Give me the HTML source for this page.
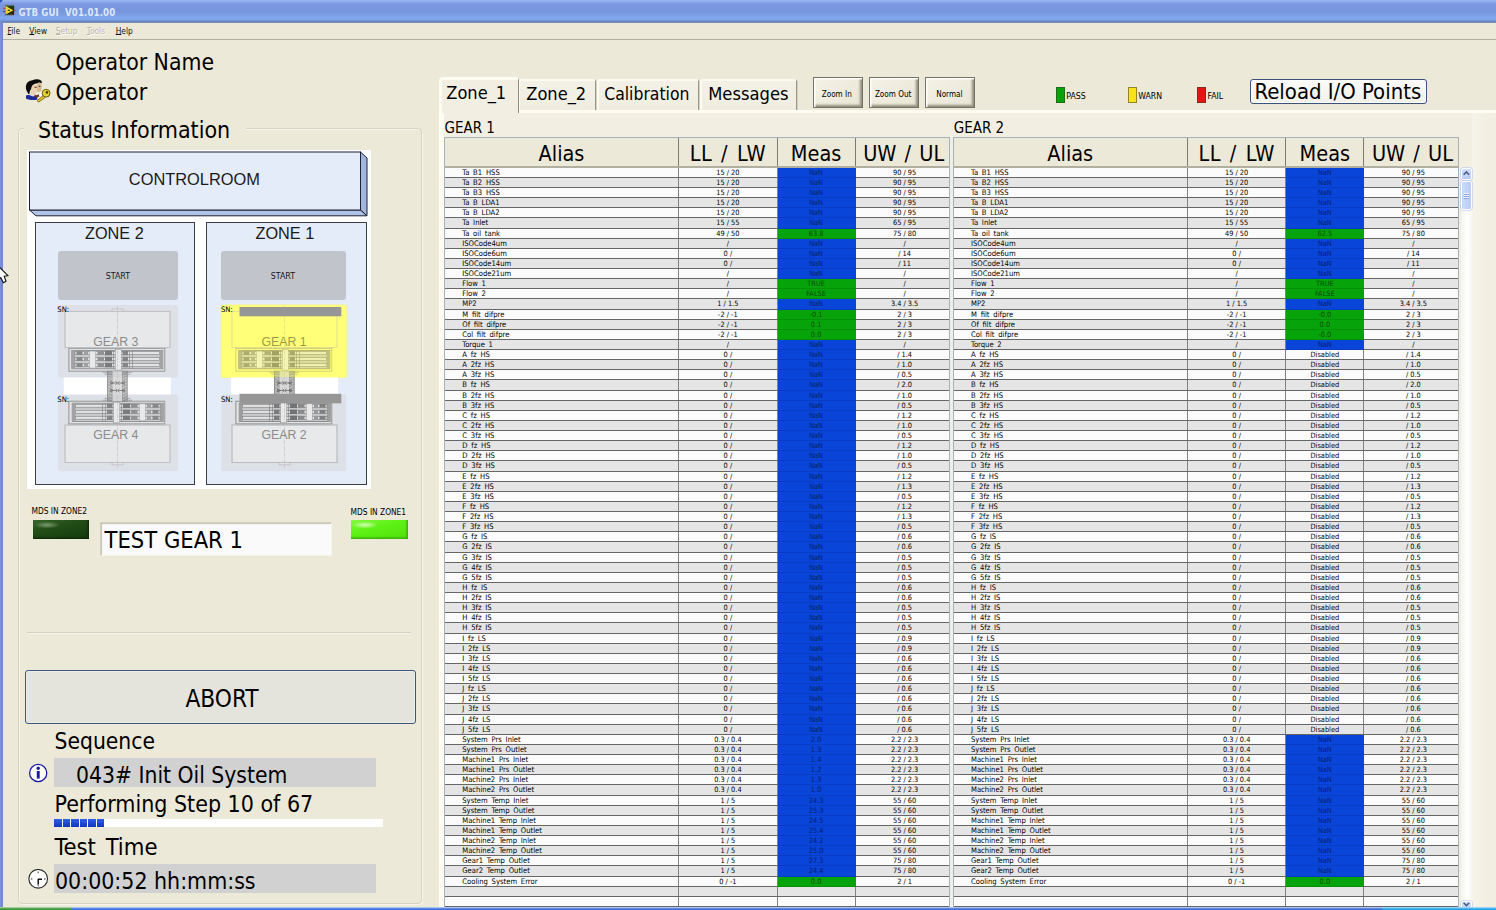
<!DOCTYPE html>
<html lang="en">
<head>
<meta charset="utf-8">
<title>GTB GUI V01.01.00</title>
<style>
*{box-sizing:border-box;margin:0;padding:0}
html,body{width:1496px;height:910px;overflow:hidden;background:#ece9d8}
body{position:relative;font-family:"DejaVu Sans Condensed","DejaVu Sans","Liberation Sans",sans-serif;font-stretch:condensed;color:#000;-webkit-font-smoothing:antialiased}
.abs{position:absolute}
.t{position:absolute;white-space:pre;line-height:1}
/* title bar */
#title{left:0;top:0;width:1496px;height:23px;background:linear-gradient(#9bb7f1 0,#8aa8ea 2px,#7b98e0 4px,#7795de 11px,#7a9be3 14px,#83a8ec 18px,#7d9fe4 20px,#6a85c6 21.5px,#7f8ea8 23px)}
#title .t{left:18.5px;top:8.2px;font-size:9.6px;font-weight:bold;color:#dde7fb;letter-spacing:.1px;text-shadow:none}
#lborder{left:0;top:20px;width:3px;height:890px;background:linear-gradient(90deg,#7f93d6,#6d84cf)}
#menu{left:3px;top:23px;width:1493px;height:17px;background:#ece9d8;border-bottom:1px solid #b0ae9e}
#menu .t{top:3.8px;font-size:8.3px;color:#111}
#menu .d{color:#b9b6a8;text-shadow:.6px .6px 0 #fff}
#menu u{text-decoration-thickness:.8px;text-underline-offset:.4px}
/* left panel */
.big{font-size:22.7px}
.grp{border:1px solid #d9d6c6;border-radius:3px;box-shadow:inset 1px 1px 0 #f7f5ea}
.field{background:#d0d0d0}
/* tabs */
.tab{position:absolute;background:#f0ede0;border:1px solid #fbfaf4;border-right:1.5px solid #aaa796;border-bottom:none;border-radius:3px 3px 0 0;font-size:18px}
/* tables */
.tbl{position:absolute;top:137.2px;height:773px;border:1px solid #a6b3bc;background:#fcfcfc;overflow:hidden}
.hd{position:absolute;left:0;top:0;width:100%;height:29.6px;background:#ece9d8;border-bottom:2px solid #b1b0a0}
.hd span{position:absolute;top:0;height:28px;text-align:center;font-size:21.5px;line-height:31.4px;word-spacing:2px;border-right:1.3px solid #7d7c74;white-space:pre}
.rows{position:absolute;left:0;top:29.6px;width:100%}
.r{position:relative;height:10.133px;border-bottom:1px solid #666;background:#fbfbfb;font-size:7.35px;line-height:10.7px;white-space:pre}
.r.e{background:#e5e5e5}
.r span{position:absolute;top:0;height:100%;text-align:center;border-right:1.3px solid #828282}
.r .a{left:0;width:234.5px;text-align:left;padding-left:17.5px;font-size:7.6px;word-spacing:1.6px}
.r .l{left:234.5px;width:98.25px}
.r .m{left:332.75px;width:78.2px}
.r .u{left:410.95px;width:93.05px;border-right:none;padding-left:4.8px}
.r .b{background:#0845d8;color:#071f6e;border-right-color:#0845d8;box-shadow:0 1px 0 #083cc2;left:332.75px;width:78.2px}
.r .g{background:#06a40a;color:#064a08;border-right-color:#06a40a;box-shadow:0 1px 0 #069008;left:332.75px;width:78.2px}
</style>
</head>
<body>
<div id="title" class="abs">
<svg class="abs" style="left:2px;top:3px" width="16" height="15" viewBox="2 3 16 15"><path d="M4.6 5h10M4.6 15.3h10" stroke="#6f7f8a" stroke-width="1" stroke-dasharray="1.2 .8"/><path d="M3 8.4h2.2M3 11.6h2.2" stroke="#c04058" stroke-width="1"/><path d="M3 11.6h2.2" stroke="#3a4aa8" stroke-width="1"/><path d="M14 10.3h2" stroke="#d04050" stroke-width="1.1"/><defs><linearGradient id="lvg" x1="0" y1="0" x2="1" y2="1"><stop offset="0" stop-color="#3a4416"/><stop offset=".5" stop-color="#1c3a14"/><stop offset="1" stop-color="#4a1606"/></linearGradient></defs><rect x="5" y="5.6" width="9.2" height="9.2" fill="url(#lvg)"/><polygon points="5.6,6 13.2,10.2 5.6,14.4" fill="#f2e23a"/><polygon points="5.6,6 8,7.3 8,13.1 5.6,14.4" fill="#f6c63a"/><ellipse cx="8.9" cy="10.3" rx="1.2" ry=".7" fill="#2a3a10"/></svg>
<span class="t">GTB GUI  V01.01.00</span><div class="abs" style="left:0;top:0;width:3px;height:3px;background:radial-gradient(circle at 0 0,#2a55b5 0,#2a55b5 1.5px,rgba(42,85,181,0) 3.2px)"></div></div>
<div id="menu" class="abs">
<span class="t" style="left:4.6px"><u>F</u>ile</span>
<span class="t" style="left:26.3px"><u>V</u>iew</span>
<span class="t d" style="left:52.8px"><u>S</u>etup</span>
<span class="t d" style="left:83.8px"><u>T</u>ools</span>
<span class="t" style="left:112.7px"><u>H</u>elp</span>
</div>
<div id="lborder" class="abs"></div>
<svg class="abs" style="left:0;top:260px" width="10" height="26" viewBox="0 260 10 26"><polygon points="-4.3,263.5 7.9,275.7 4.2,276.2 6,281.2 3.3,282.7 0.8,277.6 -4.3,281.5" fill="#fdfdff" stroke="#111" stroke-width="1.1"/></svg>

<!--LEFT_START-->
<div class="abs" style="left:17.50px;top:128.00px;width:404.50px;height:775.50px;border:1px solid #d6d3c2;border-radius:4px;box-shadow:inset 1px 1px 0 #f8f6ec,1px 1px 0 #f8f6ec"></div>
<div class="abs" style="left:24.00px;top:120.00px;width:222.00px;height:20.00px;background:#ece9d8"></div>
<span class="t" style="left:55.50px;top:51.45px;font-size:22.75px;">Operator Name</span>
<span class="t" style="left:55.50px;top:81.45px;font-size:22.75px;">Operator</span>
<span class="t" style="left:38.00px;top:118.74px;font-size:23.0px;">Status Information</span>
<svg class="abs" style="left:20px;top:74px" width="40" height="34" viewBox="0 0 40 34">
<path d="M6 21.5 C8 20.5 11 20.5 13 21 L17 22.5 L17.5 25.5 C13 26.5 8 26 6 24.5 Z" fill="#1d2a9a"/>
<path d="M9 21 L13 18 L16 21.5 L13 22.5 Z" fill="#e8d8d8"/>
<path d="M17 8.5 C19.5 8 21.5 9.5 21.6 12 L21.9 14.2 L21.2 15 L21.4 16.5 C20.5 18 18.5 18.2 17 17.5 Z" fill="#d9b890"/>
<path d="M10 12.5 C10 10 14 9.5 16 11 C17.5 12.5 17.2 14.5 17 16 L16.6 18.3 C16.4 20 15 21 13 20.6 L10.5 19 Z" fill="#ecd2b0"/>
<path d="M14.5 13.2h2.2M18.8 12.3h1.6" stroke="#2a1a10" stroke-width=".9" fill="none"/>
<path d="M14 20.5 C15.5 21.5 17.5 21.5 18.5 20 L19.5 22.5 L16 24 Z" fill="#7a2a1a"/>
<path d="M8.5 20 C6 17 5 13 6.5 10 C8 7 11 6.5 13 6 C15 4.8 19 5 21 6.5 C22 7.5 22 9 21.4 9.6 C20 8.2 18 8.4 16.8 9.6 C15 9.4 13 10.4 12 12 C11 13.5 11.5 15 10.5 16 C9.6 17 9.6 18.5 9.5 20 Z" fill="#0c0c0c"/>
<path d="M18.5 22.5 L20.5 18.5 L22.5 21 Z" fill="#fff"/>
<circle cx="26.1" cy="19.2" r="3.9" fill="#e6d23a" stroke="#6b5a08" stroke-width="1"/>
<circle cx="26.9" cy="18.4" r="1.3" fill="#4a3c06"/>
<path d="M23.2 21.6 L17.2 26.6 L18.6 28.2 L25 23.6 Z" fill="#d9c430" stroke="#6b5a08" stroke-width=".8"/>
</svg>
<div class="abs" style="left:27.00px;top:149.50px;width:344.30px;height:339.20px;background:#fff"></div>
<svg class="abs" style="left:27px;top:149px" width="345" height="70" viewBox="27 149 345 70">
<polygon points="29.5,210 360.5,210 367,215.8 36,215.8" fill="#b0c2e5" stroke="#1c2030" stroke-width="1"/>
<polygon points="360.5,152 367,158 367,215.8 360.5,210" fill="#a2b5dd" stroke="#1c2030" stroke-width="1"/>
<rect x="29.5" y="152" width="331" height="58" fill="#e5ecf9" stroke="#1c2030" stroke-width="1"/>
</svg>
<span class="t" style="left:44.40px;width:300px;text-align:center;top:170.99px;font-size:16.4px;font-family:'Liberation Sans',sans-serif;color:#1a1a1a;">CONTROLROOM</span>
<div class="abs" style="left:35.00px;top:221.75px;width:160.00px;height:263.55px;background:#e5ecf9;border:1px solid #3a3d46"></div>
<div class="abs" style="left:206.25px;top:221.75px;width:160.75px;height:263.55px;background:#e5ecf9;border:1px solid #3a3d46"></div>
<span class="t" style="left:-35.60px;width:300px;text-align:center;top:224.83px;font-size:16.3px;font-family:'Liberation Sans',sans-serif;color:#1a1a1a;">ZONE 2</span>
<span class="t" style="left:134.90px;width:300px;text-align:center;top:224.83px;font-size:16.3px;font-family:'Liberation Sans',sans-serif;color:#1a1a1a;">ZONE 1</span>
<div class="abs" style="left:58.00px;top:250.50px;width:120.00px;height:49.50px;background:#c1c4ca;border-radius:3px"></div>
<div class="abs" style="left:221.25px;top:250.50px;width:124.50px;height:49.50px;background:#c1c4ca;border-radius:3px"></div>
<span class="t" style="left:-32.10px;width:300px;text-align:center;top:272.16px;font-size:8.8px;color:#1a1a1a;">START</span>
<span class="t" style="left:132.90px;width:300px;text-align:center;top:272.16px;font-size:8.8px;color:#1a1a1a;">START</span>
<svg class="abs" style="left:27px;top:300px" width="345" height="180" viewBox="27 300 345 180">
<defs><g id="gf" stroke-width=".8"><rect x="65" y="311.3" width="105" height="36.2" fill="#ebebeb" stroke="#b4b4b4"/><rect x="65" y="425" width="105" height="37.5" fill="#ebebeb" stroke="#b4b4b4"/><rect x="68.9" y="348.5" width="95.9" height="22.7" fill="#e4e4e4" stroke="#8a8a8a"/><rect x="68.9" y="401.2" width="95.9" height="22.7" fill="#e4e4e4" stroke="#8a8a8a"/></g>
<g id="gl" fill="none" stroke="#8a8a8a" stroke-width=".7"><rect x="65" y="311.3" width="105" height="36.2" stroke="#b4b4b4"/><rect x="65" y="425" width="105" height="37.5" stroke="#b4b4b4"/><rect x="68.9" y="348.5" width="95.9" height="22.7"/><rect x="68.9" y="401.2" width="95.9" height="22.7"/><rect x="112" y="309" width="11" height="2.4" fill="#e4e4e4" stroke="#b0b0b0"/><rect x="112" y="462.5" width="11" height="2.4" fill="#e4e4e4" stroke="#b0b0b0"/><rect x="71.8" y="350.5" width="91" height="18.3" fill="#c2c2c2" stroke="#666" stroke-width=".8"/><rect x="71.8" y="350.5" width="3.2" height="18.3" fill="#8f8f8f" stroke="none"/><rect x="159.6" y="350.5" width="3.2" height="18.3" fill="#8f8f8f" stroke="none"/><rect x="75" y="351.7" width="84.6" height="2.8" fill="#e4e4e4" stroke="#5f5f5f" stroke-width=".55"/><rect x="76.5" y="351.2" width="6" height="3.8" fill="#6b6b6b" stroke="none"/><rect x="84" y="351.2" width="4" height="3.8" fill="#8a8a8a" stroke="none"/><rect x="97.5" y="351.2" width="6.5" height="3.8" fill="#777" stroke="none"/><rect x="105" y="350.9" width="7" height="4.4" fill="#5a5a5a" stroke="none"/><rect x="122.5" y="350.9" width="5.5" height="4.4" fill="#666" stroke="none"/><rect x="75" y="357.7" width="84.6" height="2.8" fill="#e4e4e4" stroke="#5f5f5f" stroke-width=".55"/><rect x="76.5" y="357.2" width="6" height="3.8" fill="#6b6b6b" stroke="none"/><rect x="84" y="357.2" width="4" height="3.8" fill="#8a8a8a" stroke="none"/><rect x="97.5" y="357.2" width="6.5" height="3.8" fill="#777" stroke="none"/><rect x="105" y="356.9" width="7" height="4.4" fill="#5a5a5a" stroke="none"/><rect x="122.5" y="356.9" width="5.5" height="4.4" fill="#666" stroke="none"/><rect x="75" y="363.7" width="84.6" height="2.8" fill="#e4e4e4" stroke="#5f5f5f" stroke-width=".55"/><rect x="76.5" y="363.2" width="6" height="3.8" fill="#6b6b6b" stroke="none"/><rect x="84" y="363.2" width="4" height="3.8" fill="#8a8a8a" stroke="none"/><rect x="97.5" y="363.2" width="6.5" height="3.8" fill="#777" stroke="none"/><rect x="105" y="362.9" width="7" height="4.4" fill="#5a5a5a" stroke="none"/><rect x="122.5" y="362.9" width="5.5" height="4.4" fill="#666" stroke="none"/><rect x="89.6" y="351.1" width="6" height="17" fill="#ececec" stroke="#8a8a8a" stroke-width=".5"/><rect x="115.3" y="349.5" width="6" height="20.6" fill="#ececec" stroke="#808080" stroke-width=".5"/><path d="M113.5 350.5v18.3M129.5 350.5v18.3M132.5 350.5v18.3" stroke="#666" stroke-width=".6"/><g transform="translate(235,0) scale(-1,1)"><rect x="71.8" y="403.2" width="91" height="18.3" fill="#c2c2c2" stroke="#666" stroke-width=".8"/><rect x="71.8" y="403.2" width="3.2" height="18.3" fill="#8f8f8f" stroke="none"/><rect x="159.6" y="403.2" width="3.2" height="18.3" fill="#8f8f8f" stroke="none"/><rect x="75" y="404.4" width="84.6" height="2.8" fill="#e4e4e4" stroke="#5f5f5f" stroke-width=".55"/><rect x="76.5" y="403.9" width="6" height="3.8" fill="#6b6b6b" stroke="none"/><rect x="84" y="403.9" width="4" height="3.8" fill="#8a8a8a" stroke="none"/><rect x="97.5" y="403.9" width="6.5" height="3.8" fill="#777" stroke="none"/><rect x="105" y="403.6" width="7" height="4.4" fill="#5a5a5a" stroke="none"/><rect x="122.5" y="403.6" width="5.5" height="4.4" fill="#666" stroke="none"/><rect x="75" y="410.4" width="84.6" height="2.8" fill="#e4e4e4" stroke="#5f5f5f" stroke-width=".55"/><rect x="76.5" y="409.9" width="6" height="3.8" fill="#6b6b6b" stroke="none"/><rect x="84" y="409.9" width="4" height="3.8" fill="#8a8a8a" stroke="none"/><rect x="97.5" y="409.9" width="6.5" height="3.8" fill="#777" stroke="none"/><rect x="105" y="409.6" width="7" height="4.4" fill="#5a5a5a" stroke="none"/><rect x="122.5" y="409.6" width="5.5" height="4.4" fill="#666" stroke="none"/><rect x="75" y="416.4" width="84.6" height="2.8" fill="#e4e4e4" stroke="#5f5f5f" stroke-width=".55"/><rect x="76.5" y="415.9" width="6" height="3.8" fill="#6b6b6b" stroke="none"/><rect x="84" y="415.9" width="4" height="3.8" fill="#8a8a8a" stroke="none"/><rect x="97.5" y="415.9" width="6.5" height="3.8" fill="#777" stroke="none"/><rect x="105" y="415.6" width="7" height="4.4" fill="#5a5a5a" stroke="none"/><rect x="122.5" y="415.6" width="5.5" height="4.4" fill="#666" stroke="none"/><rect x="89.6" y="403.8" width="6" height="17" fill="#ececec" stroke="#8a8a8a" stroke-width=".5"/><rect x="115.3" y="402.2" width="6" height="20.6" fill="#ececec" stroke="#808080" stroke-width=".5"/><path d="M113.5 403.2v18.3M129.5 403.2v18.3M132.5 403.2v18.3" stroke="#666" stroke-width=".6"/></g><rect x="107.4" y="371.2" width="19.8" height="30" fill="#adadad" stroke="#5a5a5a"/><path d="M102.5 372.3h29.7M102.5 400.2h29.7M104.5 374.2h25.7M104.5 398.4h25.7" stroke="#777"/><path d="M107.4 373.0l5 2.2M127.2 373.0l-5 2.2M107.4 375.9l5 2.2M127.2 375.9l-5 2.2M107.4 378.8l5 2.2M127.2 378.8l-5 2.2M107.4 381.7l5 2.2M127.2 381.7l-5 2.2M107.4 384.6l5 2.2M127.2 384.6l-5 2.2M107.4 387.5l5 2.2M127.2 387.5l-5 2.2M107.4 390.4l5 2.2M127.2 390.4l-5 2.2M107.4 393.3l5 2.2M127.2 393.3l-5 2.2M107.4 396.2l5 2.2M127.2 396.2l-5 2.2M107.4 399.1l5 2.2M127.2 399.1l-5 2.2" stroke="#6a6a6a" stroke-width=".6"/><path d="M112.4 371.2v30M122.2 371.2v30" stroke="#555" stroke-width=".7"/><rect x="112.4" y="371.2" width="9.8" height="30" fill="#d0d0d0" stroke="none"/><path d="M110 383h15M110 381.4l3.4 1.6-3.4 1.6M125 381.4l-3.4 1.6 3.4 1.6M115.3 381.2l2.2 1.8-2.2 1.8M119.7 381.2l-2.2 1.8 2.2 1.8M110 390.5h15M110 388.9l3.4 1.6-3.4 1.6M125 388.9l-3.4 1.6 3.4 1.6M115.3 388.7l2.2 1.8-2.2 1.8M119.7 388.7l-2.2 1.8 2.2 1.8" stroke="#3c3c3c" stroke-width=".7"/><path d="M117.5 306V468" stroke="#a9a9a9" stroke-dasharray="3 1.2 1 1.2" stroke-width=".6"/></g><clipPath id="cpb"><rect x="27" y="378" width="345" height="110"/></clipPath></defs>
<rect x="58" y="305" width="120" height="72.5" rx="2.5" fill="#dde0e6"/><rect x="63.8" y="377.5" width="107.2" height="17.5" fill="#fff"/><rect x="58" y="394.5" width="120" height="76.8" rx="2.5" fill="#dde0e6"/><rect x="221.25" y="305" width="125" height="72.5" rx="1.5" fill="#ffff80" stroke="#f6f68c" stroke-width="1.2"/><rect x="231" y="377.5" width="107.2" height="17.5" fill="#fff"/><rect x="221.25" y="394.5" width="125" height="76.8" rx="2.5" fill="#dde0e6"/><g opacity=".75"><use href="#gf"/><use href="#gl"/></g><g opacity=".82"><use href="#gf" x="167" clip-path="url(#cpb)"/><use href="#gl" x="167"/></g><rect x="221.75" y="305.5" width="124" height="71.5" rx="2" fill="#ffff66" opacity=".32"/><rect x="239.5" y="307" width="101.8" height="9.3" fill="#969696"/><rect x="239.5" y="393.8" width="101.8" height="9.5" fill="#969696"/></svg>
<span class="t" style="left:57.30px;top:306.37px;font-size:7.6px;">SN:</span>
<span class="t" style="left:57.30px;top:395.87px;font-size:7.6px;">SN:</span>
<span class="t" style="left:221.00px;top:306.37px;font-size:7.6px;">SN:</span>
<span class="t" style="left:221.00px;top:395.87px;font-size:7.6px;">SN:</span>
<span class="t" style="left:-34.25px;width:300px;text-align:center;top:335.94px;font-size:12.3px;font-family:'Liberation Sans',sans-serif;color:#8b8b8b;">GEAR 3</span>
<span class="t" style="left:-34.25px;width:300px;text-align:center;top:429.14px;font-size:12.3px;font-family:'Liberation Sans',sans-serif;color:#8b8b8b;">GEAR 4</span>
<span class="t" style="left:134.10px;width:300px;text-align:center;top:335.64px;font-size:12.3px;font-family:'Liberation Sans',sans-serif;color:#9c9c45;">GEAR 1</span>
<span class="t" style="left:134.10px;width:300px;text-align:center;top:429.14px;font-size:12.3px;font-family:'Liberation Sans',sans-serif;color:#8b8b8b;">GEAR 2</span>
<span class="t" style="left:31.50px;top:507.28px;font-size:8.3px;">MDS IN ZONE2</span>
<span class="t" style="left:350.60px;top:508.18px;font-size:8.3px;">MDS IN ZONE1</span>
<div class="abs" style="left:33.00px;top:520.00px;width:56.00px;height:19.00px;background:radial-gradient(ellipse 13px 3.5px at 14px 5px,#7d9b70 0,rgba(125,155,112,0) 100%),linear-gradient(165deg,#38662a 0,#214d16 40%,#153a0c 100%);box-shadow:inset -1.5px -1.5px 1.5px #102c08"></div>
<div class="abs" style="left:351.00px;top:519.50px;width:57.00px;height:19.50px;background:radial-gradient(ellipse 13px 3.5px at 14px 5px,#d4ffb4 0,rgba(212,255,180,0) 100%),linear-gradient(165deg,#86fb42 0,#5ff216 40%,#4fe00c 100%);box-shadow:inset -1.5px -1.5px 1.5px #38b008"></div>
<div class="abs" style="left:99.70px;top:521.70px;width:232.60px;height:33.90px;background:#fafafa;border:1.5px solid #d2cfbf;border-right-color:#f6f4ea;border-bottom-color:#f6f4ea;box-shadow:inset 1px 1px 1px #c5c3b5"></div>
<span class="t" style="left:104.60px;top:528.92px;font-size:23.5px;">TEST GEAR 1</span>
<div class="abs" style="left:27.00px;top:632.00px;width:384.00px;height:2.00px;border-top:1px solid #d3d0bf;border-bottom:1px solid #f6f4ea"></div>
<div class="abs" style="left:25.00px;top:670.40px;width:391.30px;height:53.80px;background:#e4e3dc;border:1px solid #3b587c;border-radius:3px;box-shadow:inset 0 0 0 1px #eeeee8"></div>
<span class="t" style="left:72.00px;width:300px;text-align:center;top:687.33px;font-size:24.2px;">ABORT</span>
<span class="t" style="left:54.50px;top:730.25px;font-size:22.64px;">Sequence</span>
<div class="abs" style="left:54.00px;top:758.30px;width:322.00px;height:28.70px;background:#d1d1d1"></div>
<span class="t" style="left:76.00px;top:764.23px;font-size:22.66px;">043# Init Oil System</span>
<svg class="abs" style="left:28px;top:763px" width="21" height="21" viewBox="0 0 21 21"><circle cx="10.2" cy="10" r="8.6" fill="#fff" stroke="#1a1aa0" stroke-width="1.3"/><rect x="8.8" y="8" width="2.9" height="7.6" fill="#1a1aa0"/><circle cx="10.2" cy="5.2" r="1.7" fill="#1a1aa0"/></svg>
<span class="t" style="left:54.50px;top:793.27px;font-size:22.97px;">Performing Step 10 of 67</span>
<div class="abs" style="left:54.00px;top:819.00px;width:328.80px;height:8.30px;background:#fff"></div>
<div class="abs" style="left:54.00px;top:819.40px;width:7.50px;height:7.80px;background:linear-gradient(#2f5eea,#1236c0)"></div>
<div class="abs" style="left:62.50px;top:819.40px;width:7.50px;height:7.80px;background:linear-gradient(#2f5eea,#1236c0)"></div>
<div class="abs" style="left:71.00px;top:819.40px;width:7.50px;height:7.80px;background:linear-gradient(#2f5eea,#1236c0)"></div>
<div class="abs" style="left:79.50px;top:819.40px;width:7.50px;height:7.80px;background:linear-gradient(#2f5eea,#1236c0)"></div>
<div class="abs" style="left:88.00px;top:819.40px;width:7.50px;height:7.80px;background:linear-gradient(#2f5eea,#1236c0)"></div>
<div class="abs" style="left:96.50px;top:819.40px;width:7.50px;height:7.80px;background:linear-gradient(#2f5eea,#1236c0)"></div>
<span class="t" style="left:54.50px;top:835.83px;font-size:23.6px;word-spacing:3px;">Test Time</span>
<div class="abs" style="left:54.00px;top:864.00px;width:322.00px;height:29.40px;background:#d1d1d1"></div>
<span class="t" style="left:55.00px;top:869.83px;font-size:22.9px;">00:00:52 hh:mm:ss</span>
<svg class="abs" style="left:28px;top:869px" width="21" height="21" viewBox="0 0 21 21"><circle cx="10.2" cy="9.8" r="9.3" fill="#fff" stroke="#2a2a2a" stroke-width="1.1"/><g stroke="#333" stroke-width="1"><path d="M10.2 2.6v1.6M10.2 15.8v1.6M2.8 10h1.6M16 10h1.6"/></g><path d="M10 10.3 H14 M10.2 10 V15.4" stroke="#111" stroke-width="1.5" fill="none"/></svg>
<!--LEFT_END-->
<!--RIGHT_START-->
<div class="abs" style="left:438.75px;top:109.50px;width:1061.25px;height:802.50px;background:#f2efe2;border-top:3px solid #fdfcf1;border-left:5px solid #fdfdf1"></div>
<div class="abs" style="left:518.00px;top:79.25px;width:77.50px;height:30.25px;background:linear-gradient(#f3f1e6,#f0ede0);border:2px solid #fcfbf1;border-right:1.6px solid #9a9786;border-bottom:none;border-radius:3px 3px 0 0;box-shadow:1px 0 0 #d3d0c0"></div>
<span class="t" style="left:526.25px;top:85.44px;font-size:18.1px;">Zone_2</span>
<div class="abs" style="left:597.00px;top:79.25px;width:102.00px;height:30.25px;background:linear-gradient(#f3f1e6,#f0ede0);border:2px solid #fcfbf1;border-right:1.6px solid #9a9786;border-bottom:none;border-radius:3px 3px 0 0;box-shadow:1px 0 0 #d3d0c0"></div>
<span class="t" style="left:604.25px;top:86.03px;font-size:17.4px;">Calibration</span>
<div class="abs" style="left:700.00px;top:79.25px;width:97.00px;height:30.25px;background:linear-gradient(#f3f1e6,#f0ede0);border:2px solid #fcfbf1;border-right:1.6px solid #9a9786;border-bottom:none;border-radius:3px 3px 0 0;box-shadow:1px 0 0 #d3d0c0"></div>
<span class="t" style="left:708.25px;top:85.35px;font-size:18.2px;">Messages</span>
<div class="abs" style="left:438.75px;top:77.00px;width:79.75px;height:36.20px;background:#f2efe2;border:3px solid #fdfcf1;border-right:1.6px solid #8f8c7c;border-bottom:none;border-radius:4px 4px 0 0"></div>
<span class="t" style="left:446.25px;top:84.09px;font-size:18.1px;">Zone_1</span>
<div class="abs" style="left:812.50px;top:77.00px;width:50.50px;height:30.70px;background:linear-gradient(135deg,#f4f2e6,#e9e6d6);border:1px solid #76746a;box-shadow:inset 1.5px 1.5px 0 #fffef8,inset -1.5px -1.5px 1.5px #8e8c7c,inset -3px -3px 2px #cdcab9"></div>
<span class="t" style="left:686.75px;width:300px;text-align:center;top:89.65px;font-size:8.1px;">Zoom In</span>
<div class="abs" style="left:869.00px;top:77.00px;width:50.30px;height:30.70px;background:linear-gradient(135deg,#f4f2e6,#e9e6d6);border:1px solid #76746a;box-shadow:inset 1.5px 1.5px 0 #fffef8,inset -1.5px -1.5px 1.5px #8e8c7c,inset -3px -3px 2px #cdcab9"></div>
<span class="t" style="left:743.15px;width:300px;text-align:center;top:89.65px;font-size:8.1px;">Zoom Out</span>
<div class="abs" style="left:925.30px;top:77.00px;width:50.20px;height:30.70px;background:linear-gradient(135deg,#f4f2e6,#e9e6d6);border:1px solid #76746a;box-shadow:inset 1.5px 1.5px 0 #fffef8,inset -1.5px -1.5px 1.5px #8e8c7c,inset -3px -3px 2px #cdcab9"></div>
<span class="t" style="left:799.40px;width:300px;text-align:center;top:89.65px;font-size:8.1px;">Normal</span>
<div class="abs" style="left:1056.00px;top:87.30px;width:9.00px;height:15.70px;background:#06a40a;border:1px solid rgba(60,60,40,.55)"></div>
<span class="t" style="left:1066.25px;top:92.34px;font-size:8.7px;">PASS</span>
<div class="abs" style="left:1127.50px;top:87.30px;width:9.00px;height:15.70px;background:#f7e21c;border:1px solid rgba(60,60,40,.55)"></div>
<span class="t" style="left:1138.25px;top:92.34px;font-size:8.7px;">WARN</span>
<div class="abs" style="left:1197.00px;top:87.30px;width:9.00px;height:15.70px;background:#e81414;border:1px solid rgba(60,60,40,.55)"></div>
<span class="t" style="left:1207.50px;top:92.34px;font-size:8.7px;">FAIL</span>
<div class="abs" style="left:1250.00px;top:78.75px;width:176.70px;height:25.25px;background:linear-gradient(#fbfbf8,#f1f0ea);border:1px solid #38547a;border-radius:3px;box-shadow:inset 0 0 0 1px #fff"></div>
<span class="t" style="left:1254.50px;top:81.40px;font-size:21.93px;">Reload I/O Points</span>
<span class="t" style="left:444.50px;top:120.81px;font-size:15px;">GEAR 1</span>
<span class="t" style="left:953.75px;top:120.81px;font-size:15px;">GEAR 2</span>
<div class="tbl" style="left:443.75px;width:506px"><div class="hd"><span style="left:0;width:234.5px">Alias</span><span style="left:234.5px;width:98.25px;letter-spacing:.6px">LL / LW</span><span style="left:332.75px;width:78.2px">Meas</span><span style="left:410.95px;width:93.05px;border-right:none;padding-left:3px">UW / UL</span></div><div class="rows">
<div class="r"><span class="a">Ta B1 HSS</span><span class="l">15 / 20</span><span class="m b">NaN</span><span class="u">90 / 95</span></div>
<div class="r e"><span class="a">Ta B2 HSS</span><span class="l">15 / 20</span><span class="m b">NaN</span><span class="u">90 / 95</span></div>
<div class="r"><span class="a">Ta B3 HSS</span><span class="l">15 / 20</span><span class="m b">NaN</span><span class="u">90 / 95</span></div>
<div class="r e"><span class="a">Ta B LDA1</span><span class="l">15 / 20</span><span class="m b">NaN</span><span class="u">90 / 95</span></div>
<div class="r"><span class="a">Ta B LDA2</span><span class="l">15 / 20</span><span class="m b">NaN</span><span class="u">90 / 95</span></div>
<div class="r e"><span class="a">Ta Inlet</span><span class="l">15 / 55</span><span class="m b">NaN</span><span class="u">65 / 95</span></div>
<div class="r"><span class="a">Ta oil tank</span><span class="l">49 / 50</span><span class="m g">63.8</span><span class="u">75 / 80</span></div>
<div class="r e"><span class="a">ISOCode4um</span><span class="l">/</span><span class="m b">NaN</span><span class="u">/</span></div>
<div class="r"><span class="a">ISOCode6um</span><span class="l">0 /</span><span class="m b">NaN</span><span class="u">/ 14</span></div>
<div class="r e"><span class="a">ISOCode14um</span><span class="l">0 /</span><span class="m b">NaN</span><span class="u">/ 11</span></div>
<div class="r"><span class="a">ISOCode21um</span><span class="l">/</span><span class="m b">NaN</span><span class="u">/</span></div>
<div class="r e"><span class="a">Flow 1</span><span class="l">/</span><span class="m g">TRUE</span><span class="u">/</span></div>
<div class="r"><span class="a">Flow 2</span><span class="l">/</span><span class="m g">FALSE</span><span class="u">/</span></div>
<div class="r e"><span class="a">MP2</span><span class="l">1 / 1.5</span><span class="m b">NaN</span><span class="u">3.4 / 3.5</span></div>
<div class="r"><span class="a">M filt difpre</span><span class="l">-2 / -1</span><span class="m g">-0.1</span><span class="u">2 / 3</span></div>
<div class="r e"><span class="a">Of filt difpre</span><span class="l">-2 / -1</span><span class="m g">0.1</span><span class="u">2 / 3</span></div>
<div class="r"><span class="a">Col filt difpre</span><span class="l">-2 / -1</span><span class="m g">0.0</span><span class="u">2 / 3</span></div>
<div class="r e"><span class="a">Torque 1</span><span class="l">/</span><span class="m b">NaN</span><span class="u">/</span></div>
<div class="r"><span class="a">A fz HS</span><span class="l">0 /</span><span class="m b">NaN</span><span class="u">/ 1.4</span></div>
<div class="r e"><span class="a">A 2fz HS</span><span class="l">0 /</span><span class="m b">NaN</span><span class="u">/ 1.0</span></div>
<div class="r"><span class="a">A 3fz HS</span><span class="l">0 /</span><span class="m b">NaN</span><span class="u">/ 0.5</span></div>
<div class="r e"><span class="a">B fz HS</span><span class="l">0 /</span><span class="m b">NaN</span><span class="u">/ 2.0</span></div>
<div class="r"><span class="a">B 2fz HS</span><span class="l">0 /</span><span class="m b">NaN</span><span class="u">/ 1.0</span></div>
<div class="r e"><span class="a">B 3fz HS</span><span class="l">0 /</span><span class="m b">NaN</span><span class="u">/ 0.5</span></div>
<div class="r"><span class="a">C fz HS</span><span class="l">0 /</span><span class="m b">NaN</span><span class="u">/ 1.2</span></div>
<div class="r e"><span class="a">C 2fz HS</span><span class="l">0 /</span><span class="m b">NaN</span><span class="u">/ 1.0</span></div>
<div class="r"><span class="a">C 3fz HS</span><span class="l">0 /</span><span class="m b">NaN</span><span class="u">/ 0.5</span></div>
<div class="r e"><span class="a">D fz HS</span><span class="l">0 /</span><span class="m b">NaN</span><span class="u">/ 1.2</span></div>
<div class="r"><span class="a">D 2fz HS</span><span class="l">0 /</span><span class="m b">NaN</span><span class="u">/ 1.0</span></div>
<div class="r e"><span class="a">D 3fz HS</span><span class="l">0 /</span><span class="m b">NaN</span><span class="u">/ 0.5</span></div>
<div class="r"><span class="a">E fz HS</span><span class="l">0 /</span><span class="m b">NaN</span><span class="u">/ 1.2</span></div>
<div class="r e"><span class="a">E 2fz HS</span><span class="l">0 /</span><span class="m b">NaN</span><span class="u">/ 1.3</span></div>
<div class="r"><span class="a">E 3fz HS</span><span class="l">0 /</span><span class="m b">NaN</span><span class="u">/ 0.5</span></div>
<div class="r e"><span class="a">F fz HS</span><span class="l">0 /</span><span class="m b">NaN</span><span class="u">/ 1.2</span></div>
<div class="r"><span class="a">F 2fz HS</span><span class="l">0 /</span><span class="m b">NaN</span><span class="u">/ 1.3</span></div>
<div class="r e"><span class="a">F 3fz HS</span><span class="l">0 /</span><span class="m b">NaN</span><span class="u">/ 0.5</span></div>
<div class="r"><span class="a">G fz IS</span><span class="l">0 /</span><span class="m b">NaN</span><span class="u">/ 0.6</span></div>
<div class="r e"><span class="a">G 2fz IS</span><span class="l">0 /</span><span class="m b">NaN</span><span class="u">/ 0.6</span></div>
<div class="r"><span class="a">G 3fz IS</span><span class="l">0 /</span><span class="m b">NaN</span><span class="u">/ 0.5</span></div>
<div class="r e"><span class="a">G 4fz IS</span><span class="l">0 /</span><span class="m b">NaN</span><span class="u">/ 0.5</span></div>
<div class="r"><span class="a">G 5fz IS</span><span class="l">0 /</span><span class="m b">NaN</span><span class="u">/ 0.5</span></div>
<div class="r e"><span class="a">H fz IS</span><span class="l">0 /</span><span class="m b">NaN</span><span class="u">/ 0.6</span></div>
<div class="r"><span class="a">H 2fz IS</span><span class="l">0 /</span><span class="m b">NaN</span><span class="u">/ 0.6</span></div>
<div class="r e"><span class="a">H 3fz IS</span><span class="l">0 /</span><span class="m b">NaN</span><span class="u">/ 0.5</span></div>
<div class="r"><span class="a">H 4fz IS</span><span class="l">0 /</span><span class="m b">NaN</span><span class="u">/ 0.5</span></div>
<div class="r e"><span class="a">H 5fz IS</span><span class="l">0 /</span><span class="m b">NaN</span><span class="u">/ 0.5</span></div>
<div class="r"><span class="a">I fz LS</span><span class="l">0 /</span><span class="m b">NaN</span><span class="u">/ 0.9</span></div>
<div class="r e"><span class="a">I 2fz LS</span><span class="l">0 /</span><span class="m b">NaN</span><span class="u">/ 0.9</span></div>
<div class="r"><span class="a">I 3fz LS</span><span class="l">0 /</span><span class="m b">NaN</span><span class="u">/ 0.6</span></div>
<div class="r e"><span class="a">I 4fz LS</span><span class="l">0 /</span><span class="m b">NaN</span><span class="u">/ 0.6</span></div>
<div class="r"><span class="a">I 5fz LS</span><span class="l">0 /</span><span class="m b">NaN</span><span class="u">/ 0.6</span></div>
<div class="r e"><span class="a">J fz LS</span><span class="l">0 /</span><span class="m b">NaN</span><span class="u">/ 0.6</span></div>
<div class="r"><span class="a">J 2fz LS</span><span class="l">0 /</span><span class="m b">NaN</span><span class="u">/ 0.6</span></div>
<div class="r e"><span class="a">J 3fz LS</span><span class="l">0 /</span><span class="m b">NaN</span><span class="u">/ 0.6</span></div>
<div class="r"><span class="a">J 4fz LS</span><span class="l">0 /</span><span class="m b">NaN</span><span class="u">/ 0.6</span></div>
<div class="r e"><span class="a">J 5fz LS</span><span class="l">0 /</span><span class="m b">NaN</span><span class="u">/ 0.6</span></div>
<div class="r"><span class="a">System Prs Inlet</span><span class="l">0.3 / 0.4</span><span class="m b">2.0</span><span class="u">2.2 / 2.3</span></div>
<div class="r e"><span class="a">System Prs Outlet</span><span class="l">0.3 / 0.4</span><span class="m b">1.3</span><span class="u">2.2 / 2.3</span></div>
<div class="r"><span class="a">Machine1 Prs Inlet</span><span class="l">0.3 / 0.4</span><span class="m b">1.4</span><span class="u">2.2 / 2.3</span></div>
<div class="r e"><span class="a">Machine1 Prs Outlet</span><span class="l">0.3 / 0.4</span><span class="m b">1.2</span><span class="u">2.2 / 2.3</span></div>
<div class="r"><span class="a">Machine2 Prs Inlet</span><span class="l">0.3 / 0.4</span><span class="m b">1.3</span><span class="u">2.2 / 2.3</span></div>
<div class="r e"><span class="a">Machine2 Prs Outlet</span><span class="l">0.3 / 0.4</span><span class="m b">1.0</span><span class="u">2.2 / 2.3</span></div>
<div class="r"><span class="a">System Temp Inlet</span><span class="l">1 / 5</span><span class="m b">24.3</span><span class="u">55 / 60</span></div>
<div class="r e"><span class="a">System Temp Outlet</span><span class="l">1 / 5</span><span class="m b">25.3</span><span class="u">55 / 60</span></div>
<div class="r"><span class="a">Machine1 Temp Inlet</span><span class="l">1 / 5</span><span class="m b">24.5</span><span class="u">55 / 60</span></div>
<div class="r e"><span class="a">Machine1 Temp Outlet</span><span class="l">1 / 5</span><span class="m b">25.4</span><span class="u">55 / 60</span></div>
<div class="r"><span class="a">Machine2 Temp Inlet</span><span class="l">1 / 5</span><span class="m b">24.2</span><span class="u">55 / 60</span></div>
<div class="r e"><span class="a">Machine2 Temp Outlet</span><span class="l">1 / 5</span><span class="m b">25.0</span><span class="u">55 / 60</span></div>
<div class="r"><span class="a">Gear1 Temp Outlet</span><span class="l">1 / 5</span><span class="m b">27.3</span><span class="u">75 / 80</span></div>
<div class="r e"><span class="a">Gear2 Temp Outlet</span><span class="l">1 / 5</span><span class="m b">24.4</span><span class="u">75 / 80</span></div>
<div class="r"><span class="a">Cooling System Error</span><span class="l">0 / -1</span><span class="m g">0.0</span><span class="u">2 / 1</span></div>
<div class="r e"><span class="a"></span><span class="l"></span><span class="m"></span><span class="u"></span></div>
<div class="r"><span class="a"></span><span class="l"></span><span class="m"></span><span class="u"></span></div>
</div></div>
<div class="tbl" style="left:952.5px;width:506px"><div class="hd"><span style="left:0;width:234.5px">Alias</span><span style="left:234.5px;width:98.25px;letter-spacing:.6px">LL / LW</span><span style="left:332.75px;width:78.2px">Meas</span><span style="left:410.95px;width:93.05px;border-right:none;padding-left:3px">UW / UL</span></div><div class="rows">
<div class="r"><span class="a">Ta B1 HSS</span><span class="l">15 / 20</span><span class="m b">NaN</span><span class="u">90 / 95</span></div>
<div class="r e"><span class="a">Ta B2 HSS</span><span class="l">15 / 20</span><span class="m b">NaN</span><span class="u">90 / 95</span></div>
<div class="r"><span class="a">Ta B3 HSS</span><span class="l">15 / 20</span><span class="m b">NaN</span><span class="u">90 / 95</span></div>
<div class="r e"><span class="a">Ta B LDA1</span><span class="l">15 / 20</span><span class="m b">NaN</span><span class="u">90 / 95</span></div>
<div class="r"><span class="a">Ta B LDA2</span><span class="l">15 / 20</span><span class="m b">NaN</span><span class="u">90 / 95</span></div>
<div class="r e"><span class="a">Ta Inlet</span><span class="l">15 / 55</span><span class="m b">NaN</span><span class="u">65 / 95</span></div>
<div class="r"><span class="a">Ta oil tank</span><span class="l">49 / 50</span><span class="m g">62.5</span><span class="u">75 / 80</span></div>
<div class="r e"><span class="a">ISOCode4um</span><span class="l">/</span><span class="m b">NaN</span><span class="u">/</span></div>
<div class="r"><span class="a">ISOCode6um</span><span class="l">0 /</span><span class="m b">NaN</span><span class="u">/ 14</span></div>
<div class="r e"><span class="a">ISOCode14um</span><span class="l">0 /</span><span class="m b">NaN</span><span class="u">/ 11</span></div>
<div class="r"><span class="a">ISOCode21um</span><span class="l">/</span><span class="m b">NaN</span><span class="u">/</span></div>
<div class="r e"><span class="a">Flow 1</span><span class="l">/</span><span class="m g">TRUE</span><span class="u">/</span></div>
<div class="r"><span class="a">Flow 2</span><span class="l">/</span><span class="m g">FALSE</span><span class="u">/</span></div>
<div class="r e"><span class="a">MP2</span><span class="l">1 / 1.5</span><span class="m b">NaN</span><span class="u">3.4 / 3.5</span></div>
<div class="r"><span class="a">M filt difpre</span><span class="l">-2 / -1</span><span class="m g">-0.0</span><span class="u">2 / 3</span></div>
<div class="r e"><span class="a">Of filt difpre</span><span class="l">-2 / -1</span><span class="m g">0.0</span><span class="u">2 / 3</span></div>
<div class="r"><span class="a">Col filt difpre</span><span class="l">-2 / -1</span><span class="m g">-0.0</span><span class="u">2 / 3</span></div>
<div class="r e"><span class="a">Torque 2</span><span class="l">/</span><span class="m b">NaN</span><span class="u">/</span></div>
<div class="r"><span class="a">A fz HS</span><span class="l">0 /</span><span class="m w">Disabled</span><span class="u">/ 1.4</span></div>
<div class="r e"><span class="a">A 2fz HS</span><span class="l">0 /</span><span class="m w">Disabled</span><span class="u">/ 1.0</span></div>
<div class="r"><span class="a">A 3fz HS</span><span class="l">0 /</span><span class="m w">Disabled</span><span class="u">/ 0.5</span></div>
<div class="r e"><span class="a">B fz HS</span><span class="l">0 /</span><span class="m w">Disabled</span><span class="u">/ 2.0</span></div>
<div class="r"><span class="a">B 2fz HS</span><span class="l">0 /</span><span class="m w">Disabled</span><span class="u">/ 1.0</span></div>
<div class="r e"><span class="a">B 3fz HS</span><span class="l">0 /</span><span class="m w">Disabled</span><span class="u">/ 0.5</span></div>
<div class="r"><span class="a">C fz HS</span><span class="l">0 /</span><span class="m w">Disabled</span><span class="u">/ 1.2</span></div>
<div class="r e"><span class="a">C 2fz HS</span><span class="l">0 /</span><span class="m w">Disabled</span><span class="u">/ 1.0</span></div>
<div class="r"><span class="a">C 3fz HS</span><span class="l">0 /</span><span class="m w">Disabled</span><span class="u">/ 0.5</span></div>
<div class="r e"><span class="a">D fz HS</span><span class="l">0 /</span><span class="m w">Disabled</span><span class="u">/ 1.2</span></div>
<div class="r"><span class="a">D 2fz HS</span><span class="l">0 /</span><span class="m w">Disabled</span><span class="u">/ 1.0</span></div>
<div class="r e"><span class="a">D 3fz HS</span><span class="l">0 /</span><span class="m w">Disabled</span><span class="u">/ 0.5</span></div>
<div class="r"><span class="a">E fz HS</span><span class="l">0 /</span><span class="m w">Disabled</span><span class="u">/ 1.2</span></div>
<div class="r e"><span class="a">E 2fz HS</span><span class="l">0 /</span><span class="m w">Disabled</span><span class="u">/ 1.3</span></div>
<div class="r"><span class="a">E 3fz HS</span><span class="l">0 /</span><span class="m w">Disabled</span><span class="u">/ 0.5</span></div>
<div class="r e"><span class="a">F fz HS</span><span class="l">0 /</span><span class="m w">Disabled</span><span class="u">/ 1.2</span></div>
<div class="r"><span class="a">F 2fz HS</span><span class="l">0 /</span><span class="m w">Disabled</span><span class="u">/ 1.3</span></div>
<div class="r e"><span class="a">F 3fz HS</span><span class="l">0 /</span><span class="m w">Disabled</span><span class="u">/ 0.5</span></div>
<div class="r"><span class="a">G fz IS</span><span class="l">0 /</span><span class="m w">Disabled</span><span class="u">/ 0.6</span></div>
<div class="r e"><span class="a">G 2fz IS</span><span class="l">0 /</span><span class="m w">Disabled</span><span class="u">/ 0.6</span></div>
<div class="r"><span class="a">G 3fz IS</span><span class="l">0 /</span><span class="m w">Disabled</span><span class="u">/ 0.5</span></div>
<div class="r e"><span class="a">G 4fz IS</span><span class="l">0 /</span><span class="m w">Disabled</span><span class="u">/ 0.5</span></div>
<div class="r"><span class="a">G 5fz IS</span><span class="l">0 /</span><span class="m w">Disabled</span><span class="u">/ 0.5</span></div>
<div class="r e"><span class="a">H fz IS</span><span class="l">0 /</span><span class="m w">Disabled</span><span class="u">/ 0.6</span></div>
<div class="r"><span class="a">H 2fz IS</span><span class="l">0 /</span><span class="m w">Disabled</span><span class="u">/ 0.6</span></div>
<div class="r e"><span class="a">H 3fz IS</span><span class="l">0 /</span><span class="m w">Disabled</span><span class="u">/ 0.5</span></div>
<div class="r"><span class="a">H 4fz IS</span><span class="l">0 /</span><span class="m w">Disabled</span><span class="u">/ 0.5</span></div>
<div class="r e"><span class="a">H 5fz IS</span><span class="l">0 /</span><span class="m w">Disabled</span><span class="u">/ 0.5</span></div>
<div class="r"><span class="a">I fz LS</span><span class="l">0 /</span><span class="m w">Disabled</span><span class="u">/ 0.9</span></div>
<div class="r e"><span class="a">I 2fz LS</span><span class="l">0 /</span><span class="m w">Disabled</span><span class="u">/ 0.9</span></div>
<div class="r"><span class="a">I 3fz LS</span><span class="l">0 /</span><span class="m w">Disabled</span><span class="u">/ 0.6</span></div>
<div class="r e"><span class="a">I 4fz LS</span><span class="l">0 /</span><span class="m w">Disabled</span><span class="u">/ 0.6</span></div>
<div class="r"><span class="a">I 5fz LS</span><span class="l">0 /</span><span class="m w">Disabled</span><span class="u">/ 0.6</span></div>
<div class="r e"><span class="a">J fz LS</span><span class="l">0 /</span><span class="m w">Disabled</span><span class="u">/ 0.6</span></div>
<div class="r"><span class="a">J 2fz LS</span><span class="l">0 /</span><span class="m w">Disabled</span><span class="u">/ 0.6</span></div>
<div class="r e"><span class="a">J 3fz LS</span><span class="l">0 /</span><span class="m w">Disabled</span><span class="u">/ 0.6</span></div>
<div class="r"><span class="a">J 4fz LS</span><span class="l">0 /</span><span class="m w">Disabled</span><span class="u">/ 0.6</span></div>
<div class="r e"><span class="a">J 5fz LS</span><span class="l">0 /</span><span class="m w">Disabled</span><span class="u">/ 0.6</span></div>
<div class="r"><span class="a">System Prs Inlet</span><span class="l">0.3 / 0.4</span><span class="m b">NaN</span><span class="u">2.2 / 2.3</span></div>
<div class="r e"><span class="a">System Prs Outlet</span><span class="l">0.3 / 0.4</span><span class="m b">NaN</span><span class="u">2.2 / 2.3</span></div>
<div class="r"><span class="a">Machine1 Prs Inlet</span><span class="l">0.3 / 0.4</span><span class="m b">NaN</span><span class="u">2.2 / 2.3</span></div>
<div class="r e"><span class="a">Machine1 Prs Outlet</span><span class="l">0.3 / 0.4</span><span class="m b">NaN</span><span class="u">2.2 / 2.3</span></div>
<div class="r"><span class="a">Machine2 Prs Inlet</span><span class="l">0.3 / 0.4</span><span class="m b">NaN</span><span class="u">2.2 / 2.3</span></div>
<div class="r e"><span class="a">Machine2 Prs Outlet</span><span class="l">0.3 / 0.4</span><span class="m b">NaN</span><span class="u">2.2 / 2.3</span></div>
<div class="r"><span class="a">System Temp Inlet</span><span class="l">1 / 5</span><span class="m b">NaN</span><span class="u">55 / 60</span></div>
<div class="r e"><span class="a">System Temp Outlet</span><span class="l">1 / 5</span><span class="m b">NaN</span><span class="u">55 / 60</span></div>
<div class="r"><span class="a">Machine1 Temp Inlet</span><span class="l">1 / 5</span><span class="m b">NaN</span><span class="u">55 / 60</span></div>
<div class="r e"><span class="a">Machine1 Temp Outlet</span><span class="l">1 / 5</span><span class="m b">NaN</span><span class="u">55 / 60</span></div>
<div class="r"><span class="a">Machine2 Temp Inlet</span><span class="l">1 / 5</span><span class="m b">NaN</span><span class="u">55 / 60</span></div>
<div class="r e"><span class="a">Machine2 Temp Outlet</span><span class="l">1 / 5</span><span class="m b">NaN</span><span class="u">55 / 60</span></div>
<div class="r"><span class="a">Gear1 Temp Outlet</span><span class="l">1 / 5</span><span class="m b">NaN</span><span class="u">75 / 80</span></div>
<div class="r e"><span class="a">Gear2 Temp Outlet</span><span class="l">1 / 5</span><span class="m b">NaN</span><span class="u">75 / 80</span></div>
<div class="r"><span class="a">Cooling System Error</span><span class="l">0 / -1</span><span class="m g">0.0</span><span class="u">2 / 1</span></div>
<div class="r e"><span class="a"></span><span class="l"></span><span class="m"></span><span class="u"></span></div>
<div class="r"><span class="a"></span><span class="l"></span><span class="m"></span><span class="u"></span></div>
</div></div>
<div class="abs" style="left:1472.00px;top:112.50px;width:15.00px;height:794.50px;background:linear-gradient(90deg,#f6f4ea,#f2efe2)"></div>
<div class="abs" style="left:1460.60px;top:167.60px;width:11.40px;height:738.40px;background:linear-gradient(90deg,#f4f4f0,#fefefe 60%,#f6f6f2)"></div>
<div class="abs" style="left:1460.60px;top:167.60px;width:11.40px;height:12.00px;background:linear-gradient(#d2defc,#b8cbf6);border:1px solid #fff;border-radius:2px;box-shadow:0 0 0 .5px #a9bdf0"></div>
<svg class="abs" style="left:1461px;top:168px" width="11" height="11" viewBox="0 0 11 11"><path d="M2.6 6.8 L5.4 4 L8.2 6.8" fill="none" stroke="#4d6185" stroke-width="1.6"/></svg>
<div class="abs" style="left:1460.60px;top:180.80px;width:11.40px;height:29.00px;background:linear-gradient(90deg,#cbd9fb,#b9cbf7);border:1px solid #fff;border-radius:2px;box-shadow:0 0 0 .5px #a9bdf0"></div>
<div class="abs" style="left:1464.00px;top:192.50px;width:5.00px;height:6.00px;background:repeating-linear-gradient(#eef3ff 0,#eef3ff 1px,#8ca4de 1px,#8ca4de 2px)"></div>
<div class="abs" style="left:1460.60px;top:900.70px;width:11.40px;height:11.30px;background:linear-gradient(#d2defc,#b8cbf6);border:1px solid #fff;border-radius:2px;box-shadow:0 0 0 .5px #a9bdf0"></div>
<svg class="abs" style="left:1461px;top:900px" width="11" height="8" viewBox="0 0 11 8"><path d="M2.6 2.8 L5.4 5.6 L8.2 2.8" fill="none" stroke="#4d6185" stroke-width="1.6"/></svg>
<!--RIGHT_END-->
<!--STRIP-->
<div class="abs" style="left:0;top:907px;width:1496px;height:3px;background:linear-gradient(#d5e0f6 0,#7fa3ea 1px,#3f72dc 2px,#3a6ad6 3px)"></div>
<div class="abs" style="left:0;top:907px;width:72px;height:3px;background:linear-gradient(#cfe3c8 0,#6fb56f 1px,#3f9c3f 2px,#378f37 3px)"></div>
<div class="abs" style="left:1382px;top:907px;width:114px;height:3px;background:linear-gradient(#c9e6f8 0,#6cc2f0 1px,#2aa4ea 2px,#229ae4 3px)"></div>
</body>
</html>
